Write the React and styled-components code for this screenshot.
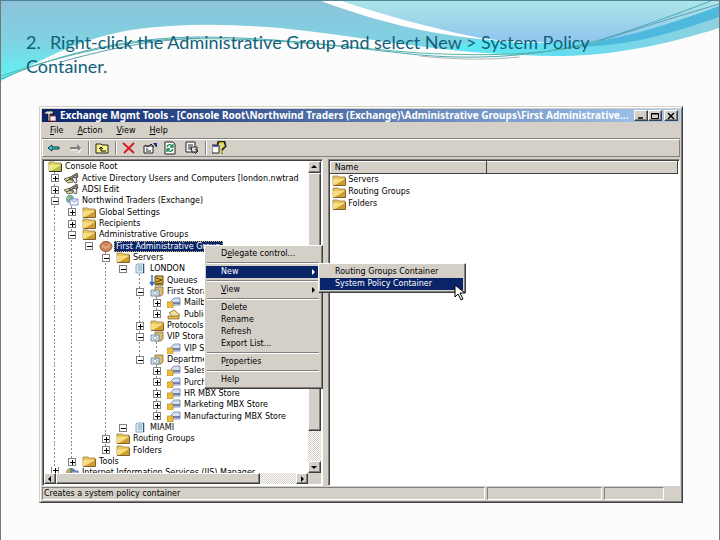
import React from 'react';
import styled, { createGlobalStyle, css } from 'styled-components';

const face = '#d4d0c8';
const navy = '#0a246a';
const uiFont = "'DejaVu Sans', Verdana, sans-serif";

const GlobalStyle = createGlobalStyle`
  * {
    box-sizing: border-box;
  }
  body {
    margin: 0;
    background: #fcfcfc;
  }
  button {
    font: inherit;
    color: inherit;
    padding: 0;
    border: 0;
    background: none;
  }
  svg {
    display: block;
  }
`;

const raised = css`
  border: 1px solid;
  border-color: #fff #404040 #404040 #fff;
  box-shadow: inset -1px -1px 0 #808080;
`;

const Slide = styled.main`
  position: relative;
  min-height: 100vh;
  padding: 27px 36px 36px 38px;
  border: 1px solid;
  border-width: 1px 1px 0 1px;
  border-color: #4f8296 #777 #777 #777;
  background: #fcfcfc;
`;

const WaveArt = styled.svg`
  position: absolute;
  top: 0;
  left: 0;
  width: 100%;
  height: 90px;
`;

const Title = styled.h1`
  position: relative;
  margin: 2px 56px 28px -13px;
  font-family: Lato, Carlito, sans-serif;
  font-size: 18px;
  line-height: 24px;
  font-weight: 400;
  font-variant-ligatures: none;
  color: #10607a;
`;

const AppWindow = styled.section`
  position: relative;
  padding: 2px;
  background: ${face};
  border: 1px solid;
  border-color: ${face} #404040 #404040 ${face};
  box-shadow: inset 1px 1px 0 #fff, inset -1px -1px 0 #808080;
  font-family: ${uiFont};
  font-size: 8px;
  color: #000;
`;

const TitleBar = styled.header`
  display: flex;
  align-items: center;
  height: 13px;
  padding: 0 2px;
  background: linear-gradient(90deg, ${navy}, #a6caf0);
  color: #fff;
`;

const WindowTitle = styled.h2`
  flex: 1;
  min-width: 0;
  margin: 0 0 0 4px;
  overflow: hidden;
  white-space: nowrap;
  font-family: 'Noto Sans', sans-serif;
  font-size: 10px;
  line-height: 13px;
  font-weight: 700;
`;

const CaptionButton = styled.button`
  ${raised}
  display: grid;
  place-items: center;
  width: 14px;
  height: 11px;
  margin-left: ${({ $gap }) => ($gap ? 2 : 0)}px;
  background: ${face};
`;

const MenuBar = styled.nav`
  display: flex;
  gap: 14px;
  height: 17px;
  padding: 2px 8px 0;
  border-bottom: 1px solid #808080;
  line-height: 14px;
`;

const ToolBar = styled.div`
  display: flex;
  align-items: center;
  gap: 6px;
  height: 18px;
  padding: 0 4px;
  border: 1px solid;
  border-color: #fff #808080 #808080 #fff;
`;

const ToolButton = styled.button`
  width: 15px;
  height: 14px;
`;

const ToolDivider = styled.span`
  width: 2px;
  height: 14px;
  margin: 0 -1px;
  border-left: 1px solid #808080;
  border-right: 1px solid #fff;
`;

const Panes = styled.div`
  position: relative;
  display: grid;
  grid-template-columns: 44% 1fr;
  gap: 5px;
  padding-top: 2px;
`;

const Pane = styled.div`
  min-width: 0;
  background: #fff;
  border: 1px solid;
  border-color: #808080 #fff #fff #808080;
  box-shadow: inset 1px 1px 0 #404040;
  padding: 1px;
`;

const TreePane = styled(Pane)`
  display: grid;
  grid-template-columns: 1fr 13px;
  grid-template-rows: auto 11px;
`;

const Tree = styled.ul`
  min-width: 0;
  margin: 0;
  padding: 0 0 0 2px;
  list-style: none;
  overflow: hidden;
`;

const Row = styled.li`
  display: flex;
  align-items: center;
  height: 11px;
  white-space: nowrap;
  &:nth-child(3n + 2) {
    height: 12px;
  }
  &:last-child {
    height: 6px;
    align-items: flex-start;
    overflow: hidden;
  }
`;

const Guide = styled.span`
  position: relative;
  flex: none;
  display: flex;
  align-items: center;
  justify-content: center;
  width: 17px;
  height: 100%;
  background: ${({ $line }) =>
    $line ? 'repeating-linear-gradient(#8c8c8c 0 2px, #fff 2px 4px) 8px 0 / 1px 100% no-repeat' : 'none'};
`;

const Expander = styled.button`
  display: grid;
  place-items: center;
  width: 8px;
  height: 8px;
  background: #fff;
  border: 1px solid #808080;
`;

const IconCell = styled.span`
  flex: none;
  display: flex;
  justify-content: center;
  width: 17px;
`;

const Label = styled.span`
  padding: 0 2px;
  line-height: 11px;
  ${({ $selected }) =>
    $selected &&
    css`
      color: #fff;
      background: ${navy};
      outline: 1px dotted #d0b060;
      outline-offset: -1px;
    `}
`;

const checker = css`
  background: repeating-conic-gradient(#d4d0c8 0 25%, #fff 0 50%) 0 0 / 2px 2px;
`;

const ScrollBar = styled.div`
  ${checker}
  display: flex;
  flex-direction: ${({ $vertical }) => ($vertical ? 'column' : 'row')};
`;

const ArrowButton = styled.button`
  ${raised}
  flex: 0 0 12px;
  display: grid;
  place-items: center;
  background: ${face};
`;

const Thumb = styled.span`
  ${raised}
  flex: ${({ $size }) => $size} 0 0;
  background: ${face};
`;

const Track = styled.span`
  flex: ${({ $size }) => $size} 0 0;
`;

const Corner = styled.span`
  background: ${face};
`;

const List = styled.table`
  width: 100%;
  border-collapse: collapse;
  th {
    height: 12px;
    padding: 0 4px;
    text-align: left;
    font-weight: 400;
    line-height: 10px;
    background: ${face};
    border: 1px solid #808080;
    border-color: #fff #404040 #404040 #fff;
  }
  th:first-child {
    width: 45%;
  }
  td {
    height: 12px;
    padding: 0 2px;
  }
`;

const ItemName = styled.span`
  display: flex;
  align-items: center;
  gap: 2px;
  line-height: 12px;
`;

const StatusBar = styled.footer`
  display: grid;
  grid-template-columns: 444fr 116fr 60fr 14fr;
  gap: 2px;
  padding-top: 1px;
  line-height: 11px;
`;

const StatusCell = styled.span`
  height: 13px;
  padding: 0 1px;
  border: 1px solid;
  border-color: #808080 #fff #fff #808080;
`;

const Popup = styled.div`
  ${raised}
  position: absolute;
  z-index: 2;
  padding: 2px 2px 2px 1px;
  background: ${face};
`;

const ContextMenu = styled(Popup)`
  top: 88px;
  left: 162px;
  width: 119px;
`;

const SubMenu = styled(Popup)`
  top: -3px;
  left: 112px;
  width: 148px;
  color: #000;
`;

const ItemWrap = styled.div`
  position: relative;
`;

const MenuItem = styled.button`
  display: flex;
  align-items: center;
  justify-content: space-between;
  width: 100%;
  height: 12px;
  padding: 0 4px 0 15px;
  line-height: 12px;
  text-align: left;
  white-space: nowrap;
  ${({ $active }) =>
    $active &&
    css`
      color: #fff;
      background: ${navy};
    `}
`;

const MenuRule = styled.hr`
  height: 2px;
  margin: 2px 1px;
  border: 0;
  border-top: 1px solid #808080;
  border-bottom: 1px solid #fff;
`;

const Pointer = styled.svg`
  position: absolute;
  z-index: 3;
  top: 20px;
  right: -2px;
`;

const Waves = () => (
  <WaveArt viewBox="0 0 720 90" preserveAspectRatio="none" aria-hidden="true">
    <defs>
      <linearGradient id="left" x1="0" y1="0" x2="0" y2="1">
        <stop offset="0" stopColor="#8dc3db" />
        <stop offset="0.5" stopColor="#7fd2e2" />
        <stop offset="1" stopColor="#5ff4f3" />
      </linearGradient>
      <linearGradient id="right" x1="0" y1="0" x2="0" y2="1">
        <stop offset="0" stopColor="#ace6e7" />
        <stop offset="1" stopColor="#8fc4ee" />
      </linearGradient>
      <linearGradient id="band" x1="0" y1="0" x2="1" y2="0">
        <stop offset="0" stopColor="#5eeaf2" />
        <stop offset="0.4" stopColor="#64dcf0" />
        <stop offset="1" stopColor="#8fd0e0" />
      </linearGradient>
    </defs>
    <path
      d="M0 0H322C380 16 430 30 490 39C540 46 570 48 600 42L600 52C560 57 510 54 460 50C400 44 340 33 280 27C230 23 180 22 130 29C80 38 50 54 0 80Z"
      fill="url(#left)"
    />
    <path d="M480 38C540 46 600 44 720 6V27C660 46 610 54 565 55C530 55 480 52 450 48Z" fill="url(#band)" />
    <path d="M340 0H720V6C660 26 620 38 590 41C540 42 500 40 480 37C430 27 390 15 340 0Z" fill="url(#right)" />
    <path d="M720 5C670 24 630 35 600 40C590 43 580 45 570 46C620 46 660 37 720 16Z" fill="#4eb9dc" />
    <path d="M321 0H342C385 16 430 28 492 39C430 34 375 20 321 0Z" fill="#fff" />
    <g fill="none" strokeWidth="1">
      <path d="M0 78C60 52 130 36 200 36C290 37 350 47 420 54C490 60 550 53 600 39C640 27 680 12 712 0" stroke="#4ba9b4" />
      <path d="M0 75C50 58 120 39 180 38C270 36 340 46 420 52C500 56 550 53 600 41" stroke="#54b5a6" />
      <path d="M60 61C110 47 150 39 200 37" stroke="#5a9eb6" />
      <path d="M420 55C460 59 490 59 520 56" stroke="#a9b8b4" />
      <path d="M600 40C650 24 690 12 720 3" stroke="#5a9eb6" />
    </g>
  </WaveArt>
);

const Folder = ({ olive }) => (
  <svg width="14" height="11" viewBox="0 0 14 11">
    <path d="M1 2V1h5l1 1h6v8H1z" fill={olive ? '#d8d860' : '#edc65b'} stroke="#8a713a" strokeWidth=".7" />
    <path d="M1 4h12L11 10H1z" fill={olive ? '#eceb8a' : '#f8dc80'} />
    <path d="M3 10L13 4v6z" fill={olive ? '#b9bb40' : '#cf9c2e'} />
    <path d="M1 10.5h12.5V3" fill="none" stroke={olive ? '#333' : '#80602b'} />
  </svg>
);

const Directory = () => (
  <svg width="15" height="11" viewBox="0 0 15 11">
    <path d="M0 6L6 4l3 5-5 1z" fill="#d8d39a" stroke="#504d3a" strokeWidth=".8" />
    <path d="M5 5L13 0l1 4-5 3z" fill="#a5a376" stroke="#35352b" strokeWidth=".8" />
    <path d="M8 5l4-3 1 7-2 1z" fill="#eee" stroke="#333" strokeWidth=".8" />
    <path d="M2 8l5-2M9 4l3 1" stroke="#222" strokeWidth=".8" />
  </svg>
);

const Exchange = () => (
  <svg width="15" height="11" viewBox="0 0 15 11">
    <circle cx="6" cy="4" r="4" fill="#68a9b4" />
    <path d="M2 3l3-2 2 2-2 3z" fill="#8fc779" />
    <path d="M6 4h8v6H6z" fill="#f2f6ff" stroke="#7080b2" strokeWidth=".8" />
    <path d="M6 4l4 3 4-3" fill="none" stroke="#7080b2" strokeWidth=".8" />
  </svg>
);

const AdminGroup = () => (
  <svg width="14" height="11" viewBox="0 0 14 11">
    <ellipse cx="7" cy="5.5" rx="6" ry="5" fill="#cc8658" stroke="#975238" />
    <path d="M3 3l4 5 4-5M2 6h10" fill="none" stroke="#edb995" strokeWidth=".8" />
  </svg>
);

const Server = () => (
  <svg width="10" height="11" viewBox="0 0 10 11">
    <path d="M2 1h7v9H1V2z" fill="#d7e9f5" stroke="#8fa9bc" />
    <path d="M3 3h4M3 5h4M3 7h4" stroke="#6793b2" strokeWidth=".8" />
    <path d="M8.500 1v9" stroke="#36536b" />
  </svg>
);

const Queue = () => (
  <svg width="15" height="11" viewBox="0 0 15 11">
    <path d="M3 0v9M1 7l2 3 2-3" fill="none" stroke="#2f66b5" strokeWidth="1.400" />
    <path d="M6 1h8v9H6z" fill="#e3b53e" stroke="#5a471c" />
    <path d="M7 3l6 2M7 7l6-2M7 9l6-1" stroke="#5a471c" />
  </svg>
);

const StorageGroup = () => (
  <svg width="14" height="11" viewBox="0 0 14 11">
    <path d="M5 1h8v7l-2 2H5z" fill="#d8bd72" stroke="#7c6b3c" strokeWidth=".8" />
    <path d="M1 4h8v6H1z" fill="#d6e6ef" stroke="#637c8d" strokeWidth=".8" />
    <ellipse cx="5" cy="7" rx="2" ry="1.600" fill="#f5fafc" stroke="#68879b" strokeWidth=".6" />
  </svg>
);

const Store = () => (
  <svg width="14" height="11" viewBox="0 0 14 11">
    <path d="M4 4l3-3h6v7H5z" fill="#d5dfef" stroke="#6b7ea6" strokeWidth=".8" />
    <path d="M5 6h8" stroke="#455b91" strokeWidth="1.400" />
    <path d="M0 5h6v6H0z" fill="#efbd3c" stroke="#b88a20" strokeWidth=".7" />
  </svg>
);

const PublicStore = () => (
  <svg width="14" height="11" viewBox="0 0 14 11">
    <path d="M2 4l5-3 6 5-6 3z" fill="#f1df9a" stroke="#80682a" strokeWidth=".8" />
    <path d="M1 7h11v3H1z" fill="#e2b64b" stroke="#80682a" strokeWidth=".7" />
  </svg>
);

const Iis = () => (
  <svg width="15" height="11" viewBox="0 0 15 11">
    <circle cx="7" cy="6" r="5" fill="#4e8d99" />
    <path d="M2 5l3-4 2 3-2 5z" fill="#d3a25c" />
    <path d="M7 4h7v6H7z" fill="#a9bed6" stroke="#506780" />
  </svg>
);

const icons = {
  root: <Folder olive />,
  folder: <Folder />,
  directory: <Directory />,
  exchange: <Exchange />,
  admin: <AdminGroup />,
  server: <Server />,
  queue: <Queue />,
  group: <StorageGroup />,
  store: <Store />,
  publicStore: <PublicStore />,
  iis: <Iis />,
};

// guides: one character per level, "|" draws the dotted connector
const nodes = [
  { guides: '', icon: 'root', label: 'Console Root' },
  { guides: '|', sign: '+', icon: 'directory', label: 'Active Directory Users and Computers [london.nwtrad' },
  { guides: '|', sign: '+', icon: 'directory', label: 'ADSI Edit' },
  { guides: '|', sign: '-', icon: 'exchange', label: 'Northwind Traders (Exchange)' },
  { guides: '||', sign: '+', icon: 'folder', label: 'Global Settings' },
  { guides: '||', sign: '+', icon: 'folder', label: 'Recipients' },
  { guides: '||', sign: '-', icon: 'folder', label: 'Administrative Groups' },
  { guides: '|| ', sign: '-', icon: 'admin', label: 'First Administrative Group', selected: true },
  { guides: '|| |', sign: '-', icon: 'folder', label: 'Servers' },
  { guides: '|| | ', sign: '-', icon: 'server', label: 'LONDON' },
  { guides: '|| | |', icon: 'queue', label: 'Queues' },
  { guides: '|| | |', sign: '-', icon: 'group', label: 'First Storage Group' },
  { guides: '|| | ||', sign: '+', icon: 'store', label: 'Mailbox Store' },
  { guides: '|| | ||', sign: '+', icon: 'publicStore', label: 'Public Folder Store' },
  { guides: '|| | |', sign: '+', icon: 'folder', label: 'Protocols' },
  { guides: '|| | |', sign: '-', icon: 'group', label: 'VIP Storage Group' },
  { guides: '|| | ||', icon: 'store', label: 'VIP Store' },
  { guides: '|| | |', sign: '-', icon: 'group', label: 'Department Storage' },
  { guides: '|| |  |', sign: '+', icon: 'store', label: 'Sales MBX Store' },
  { guides: '|| |  |', sign: '+', icon: 'store', label: 'Purchasing MBX' },
  { guides: '|| |  |', sign: '+', icon: 'store', label: 'HR MBX Store' },
  { guides: '|| |  |', sign: '+', icon: 'store', label: 'Marketing MBX Store' },
  { guides: '|| |  |', sign: '+', icon: 'store', label: 'Manufacturing MBX Store' },
  { guides: '|| | ', sign: '-', icon: 'server', label: 'MIAMI' },
  { guides: '|| |', sign: '+', icon: 'folder', label: 'Routing Groups' },
  { guides: '|| |', sign: '+', icon: 'folder', label: 'Folders' },
  { guides: '||', sign: '+', icon: 'folder', label: 'Tools' },
  { guides: '|', sign: '+', icon: 'iis', label: 'Internet Information Services (IIS) Manager' },
];

const TreeRow = ({ node }) => {
  const cells = node.guides.split('');
  return (
    <Row role="treeitem" aria-selected={!!node.selected}>
      {cells.map((cell, i) => (
        <Guide key={i} $line={cell === '|'}>
          {i === cells.length - 1 && node.sign && (
            <Expander aria-label={node.sign === '+' ? 'Expand' : 'Collapse'}>
              <svg width="6" height="6" viewBox="0 0 6 6" shapeRendering="crispEdges">
                <path d={node.sign === '+' ? 'M1 3h5v1H1zM3 1h1v5H3z' : 'M1 3h5v1H1z'} />
              </svg>
            </Expander>
          )}
        </Guide>
      ))}
      <IconCell>{icons[node.icon]}</IconCell>
      <Label $selected={node.selected}>{node.label}</Label>
    </Row>
  );
};

const arrows = {
  up: 'M0 4h6L3 1z',
  down: 'M0 2h6L3 5z',
  left: 'M4 0v6L1 3z',
  right: 'M2 0v6l3-3z',
};

const Arrow = ({ to }) => (
  <svg width="6" height="6" viewBox="0 0 6 6">
    <path d={arrows[to]} fill="currentColor" />
  </svg>
);

const tools = [
  ['Back', <><path d="M1 7l4-3v2h7v2H5v2z" fill="#35d7d7" stroke="#063c3e" /></>],
  ['Forward', <><path d="M13 7L9 3v3H2v2h7v3z" fill="#808080" /><path d="M3 9h7v3l4-4" fill="none" stroke="#fff" /></>],
  null,
  ['Up one level', <><path d="M1 3h5l1 1h6v8H1z" fill="#f8f48a" stroke="#222" /><path d="M6 10V6M4 8l2-2 2 2M6 10h5" fill="none" stroke="#000" /></>],
  null,
  ['Delete', <path d="M1 2l11 10M12 2L2 12" stroke="#d71920" strokeWidth="1.800" />],
  ['Properties', <><path d="M1 5h9v7H1z" fill="#fff" stroke="#222" /><path d="M3 8h2M3 10h5M2 4l3 2 3-3 3 3" fill="none" stroke="#222" /><path d="M10 2h4v4h-1z" fill="#182e8e" /></>],
  ['Refresh', <><path d="M1 1h8l2 2v10H1z" fill="#fff" stroke="#222" /><path d="M3 6c1-3 4-3 5-1M9 3v3H6M9 8c-1 3-4 3-5 1M3 11V8h3" fill="none" stroke="#118646" strokeWidth="1.300" /></>],
  ['Export list', <><path d="M1 1h9v10H1z" fill="#fff" stroke="#222" /><path d="M3 4h5M3 6h3M3 8h3" stroke="#222" /><path d="M6 6h6v5H7zM10 8l3 2-3 3" fill="#ddd" stroke="#222" /></>],
  null,
  ['Help', <><path d="M0 4h7v8H0z" fill="#fff" stroke="#222" /><path d="M1 5h5" stroke="#182e8e" strokeWidth="1.500" /><path d="M6 4l1-3h5l1 4-3 3v1M9 11h2" fill="none" stroke="#222" strokeWidth="3" /><path d="M7 4l1-2h3l1 3-3 2v2M9 11h2" fill="none" stroke="#f1e529" strokeWidth="1.600" /></>],
];

const NewMenu = () => (
  <SubMenu role="menu">
    <MenuItem role="menuitem">Routing Groups Container</MenuItem>
    <MenuItem role="menuitem" $active>System Policy Container</MenuItem>
    <Pointer width="13" height="18" viewBox="0 0 13 18">
      <path d="M1 1v12l3-3 3 6 2-1-3-6h5z" fill="#fff" stroke="#000" />
    </Pointer>
  </SubMenu>
);

const Actions = () => (
  <ContextMenu role="menu">
    <MenuItem role="menuitem"><span>D<u>e</u>legate control...</span></MenuItem>
    <MenuRule />
    <ItemWrap>
      <MenuItem role="menuitem" $active>New <Arrow to="right" /></MenuItem>
      <NewMenu />
    </ItemWrap>
    <MenuRule />
    <MenuItem role="menuitem"><span><u>V</u>iew</span> <Arrow to="right" /></MenuItem>
    <MenuRule />
    <MenuItem role="menuitem">Delete</MenuItem>
    <MenuItem role="menuitem">Rename</MenuItem>
    <MenuItem role="menuitem">Refresh</MenuItem>
    <MenuItem role="menuitem">Export List...</MenuItem>
    <MenuRule />
    <MenuItem role="menuitem"><span>P<u>r</u>operties</span></MenuItem>
    <MenuRule />
    <MenuItem role="menuitem">Help</MenuItem>
  </ContextMenu>
);

const App = () => (
  <Slide>
    <GlobalStyle />
    <Waves />
    <Title>2.&nbsp; Right-click the Administrative Group and select New &gt; System Policy Container.</Title>
    <AppWindow>
      <TitleBar>
        <svg width="12" height="12" viewBox="0 0 12 12">
          <path d="M0 3l3-2h6v3H6v7H4V4H1z" fill="#ddd" stroke="#111" strokeWidth=".7" />
          <path d="M6 6h6v5H6z" fill="#eee" stroke="#922" strokeWidth=".8" />
        </svg>
        <WindowTitle>
          Exchange Mgmt Tools - [Console Root\Northwind Traders (Exchange)\Administrative Groups\First Administrative...
        </WindowTitle>
        <CaptionButton aria-label="Minimize">
          <svg width="10" height="8"><path d="M2 6h5" stroke="#000" strokeWidth="1.500" /></svg>
        </CaptionButton>
        <CaptionButton aria-label="Maximize">
          <svg width="10" height="8"><path d="M1.500 1.500h7v5h-7zM1 2h8" fill="none" stroke="#000" /></svg>
        </CaptionButton>
        <CaptionButton aria-label="Close" $gap>
          <svg width="10" height="8"><path d="M2 1l6 6M8 1L2 7" stroke="#000" strokeWidth="1.500" /></svg>
        </CaptionButton>
      </TitleBar>
      <MenuBar>
        <button><u>F</u>ile</button>
        <button><u>A</u>ction</button>
        <button><u>V</u>iew</button>
        <button><u>H</u>elp</button>
      </MenuBar>
      <ToolBar>
        {tools.map((tool, i) =>
          tool ? (
            <ToolButton key={i} aria-label={tool[0]}>
              <svg width="15" height="14" viewBox="0 0 15 14">{tool[1]}</svg>
            </ToolButton>
          ) : (
            <ToolDivider key={i} />
          )
        )}
      </ToolBar>
      <Panes>
        <TreePane>
          <Tree role="tree">
            {nodes.map((node) => <TreeRow key={node.label} node={node} />)}
          </Tree>
          <ScrollBar $vertical>
            <ArrowButton aria-label="Scroll up"><Arrow to="up" /></ArrowButton>
            <Thumb $size={260} />
            <Track $size={30} />
            <ArrowButton aria-label="Scroll down"><Arrow to="down" /></ArrowButton>
          </ScrollBar>
          <ScrollBar>
            <ArrowButton aria-label="Scroll left"><Arrow to="left" /></ArrowButton>
            <Thumb $size={203} />
            <Track $size={36} />
            <ArrowButton aria-label="Scroll right"><Arrow to="right" /></ArrowButton>
          </ScrollBar>
          <Corner />
        </TreePane>
        <Pane>
          <List>
            <thead>
              <tr><th>Name</th><th aria-label="Description" /></tr>
            </thead>
            <tbody>
              {['Servers', 'Routing Groups', 'Folders'].map((name) => (
                <tr key={name}>
                  <td><ItemName><Folder />{name}</ItemName></td>
                  <td />
                </tr>
              ))}
            </tbody>
          </List>
        </Pane>
        <Actions />
      </Panes>
      <StatusBar>
        <StatusCell>Creates a system policy container</StatusCell>
        <StatusCell />
        <StatusCell />
      </StatusBar>
    </AppWindow>
  </Slide>
);

export default App;
